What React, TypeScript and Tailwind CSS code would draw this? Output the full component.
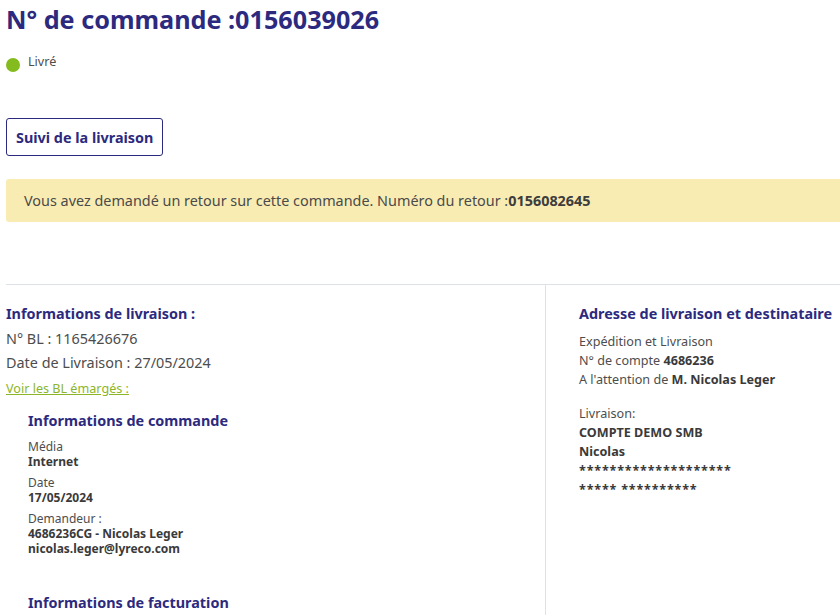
const navy = "text-[#2c2a7e]";

const orderFields = [
  { label: "Média", lines: ["Internet"] },
  { label: "Date", lines: ["17/05/2024"] },
  { label: "Demandeur :", lines: ["4686236CG - Nicolas Leger", "nicolas.leger@lyreco.com"] },
];

export default function App() {
  return (
    <div className="min-h-screen overflow-hidden bg-white pl-[6px] pt-[2px] font-['Noto_Sans',sans-serif] text-[#4d4d4d]">
      {/* HEADER */}
      <h1 className={`whitespace-nowrap text-[25.2px] font-bold leading-[34px] ${navy}`}>
        N° de commande :0156039026
      </h1>

      <div className="mt-[16px] flex h-5 items-start gap-2">
        <span className="mt-[6px] h-[14px] w-[14px] rounded-full bg-[#84bb1e]" />
        <span className="text-[12.6px] leading-[20px]">Livré</span>
      </div>

      <button className={`mt-[46px] h-[38px] rounded-[3px] border border-[#2c2a7e] px-[9px] pt-[1px] text-[14.4px] font-bold ${navy}`}>
        Suivi de la livraison
      </button>

      {/* RETURN NOTICE */}
      <div className="mt-[23px] flex h-[43px] items-center whitespace-nowrap rounded-l-[3px] bg-[#f9ecb3] pl-[18px] text-[14.4px] text-[#4a4a4a]">
        Vous avez demandé un retour sur cette commande. Numéro du retour :
        <span className="font-bold text-[#3d3d3d]">0156082645</span>
      </div>

      {/* DETAILS */}
      <div className="mt-[62px] grid grid-cols-[539px_1fr] border-t border-[#dde1e8]">
        <div className="pt-[17px]">
          <h2 className={`text-[14.4px] font-bold leading-[24px] ${navy}`}>
            Informations de livraison :
          </h2>
          <p className="mt-[1px] text-[14.4px] leading-[24px]">N° BL : 1165426676</p>
          <p className="text-[14.4px] leading-[24px]">Date de Livraison : 27/05/2024</p>
          <a href="#" className="mt-[1px] block text-[12.6px] leading-[25px] text-[#8cb52a] underline">
            Voir les BL émargés :
          </a>

          <div className="pl-[22px]">
            <h3 className={`mt-[8px] text-[14.4px] font-bold leading-[24px] ${navy}`}>
              Informations de commande
            </h3>
            <div className="mt-[6px]">
              {orderFields.map((field) => (
                <div key={field.label} className="mb-[6px] text-[12px] leading-[15px]">
                  <div>{field.label}</div>
                  {field.lines.map((line) => (
                    <div key={line} className="font-bold text-[#3a3a3a]">
                      {line}
                    </div>
                  ))}
                </div>
              ))}
            </div>
            <h3 className={`mt-[35px] text-[14.4px] font-bold leading-[24px] ${navy}`}>
              Informations de facturation
            </h3>
          </div>
        </div>

        <div className="min-h-[330px] border-l border-[#dde1e8] pl-[33px] pt-[17px]">
          <h2 className={`whitespace-nowrap text-[14.4px] font-bold leading-[24px] ${navy}`}>
            Adresse de livraison et destinataire
          </h2>
          <div className="mt-[6px] text-[12.6px] leading-[19px]">
            <p>Expédition et Livraison</p>
            <p>
              N° de compte <span className="font-bold text-[#3a3a3a]">4686236</span>
            </p>
            <p>
              A l'attention de <span className="font-bold text-[#3a3a3a]">M. Nicolas Leger</span>
            </p>
          </div>
          <div className="mt-[15px] text-[12.6px] leading-[19px]">
            <p>Livraison:</p>
            <p className="font-bold text-[#3a3a3a]">COMPTE DEMO SMB</p>
            <p className="font-bold text-[#3a3a3a]">Nicolas</p>
            <p className="font-bold tracking-[0.8px] text-[#3a3a3a]">********************</p>
            <p className="font-bold tracking-[0.8px] text-[#3a3a3a]">***** **********</p>
          </div>
        </div>
      </div>
    </div>
  );
}
